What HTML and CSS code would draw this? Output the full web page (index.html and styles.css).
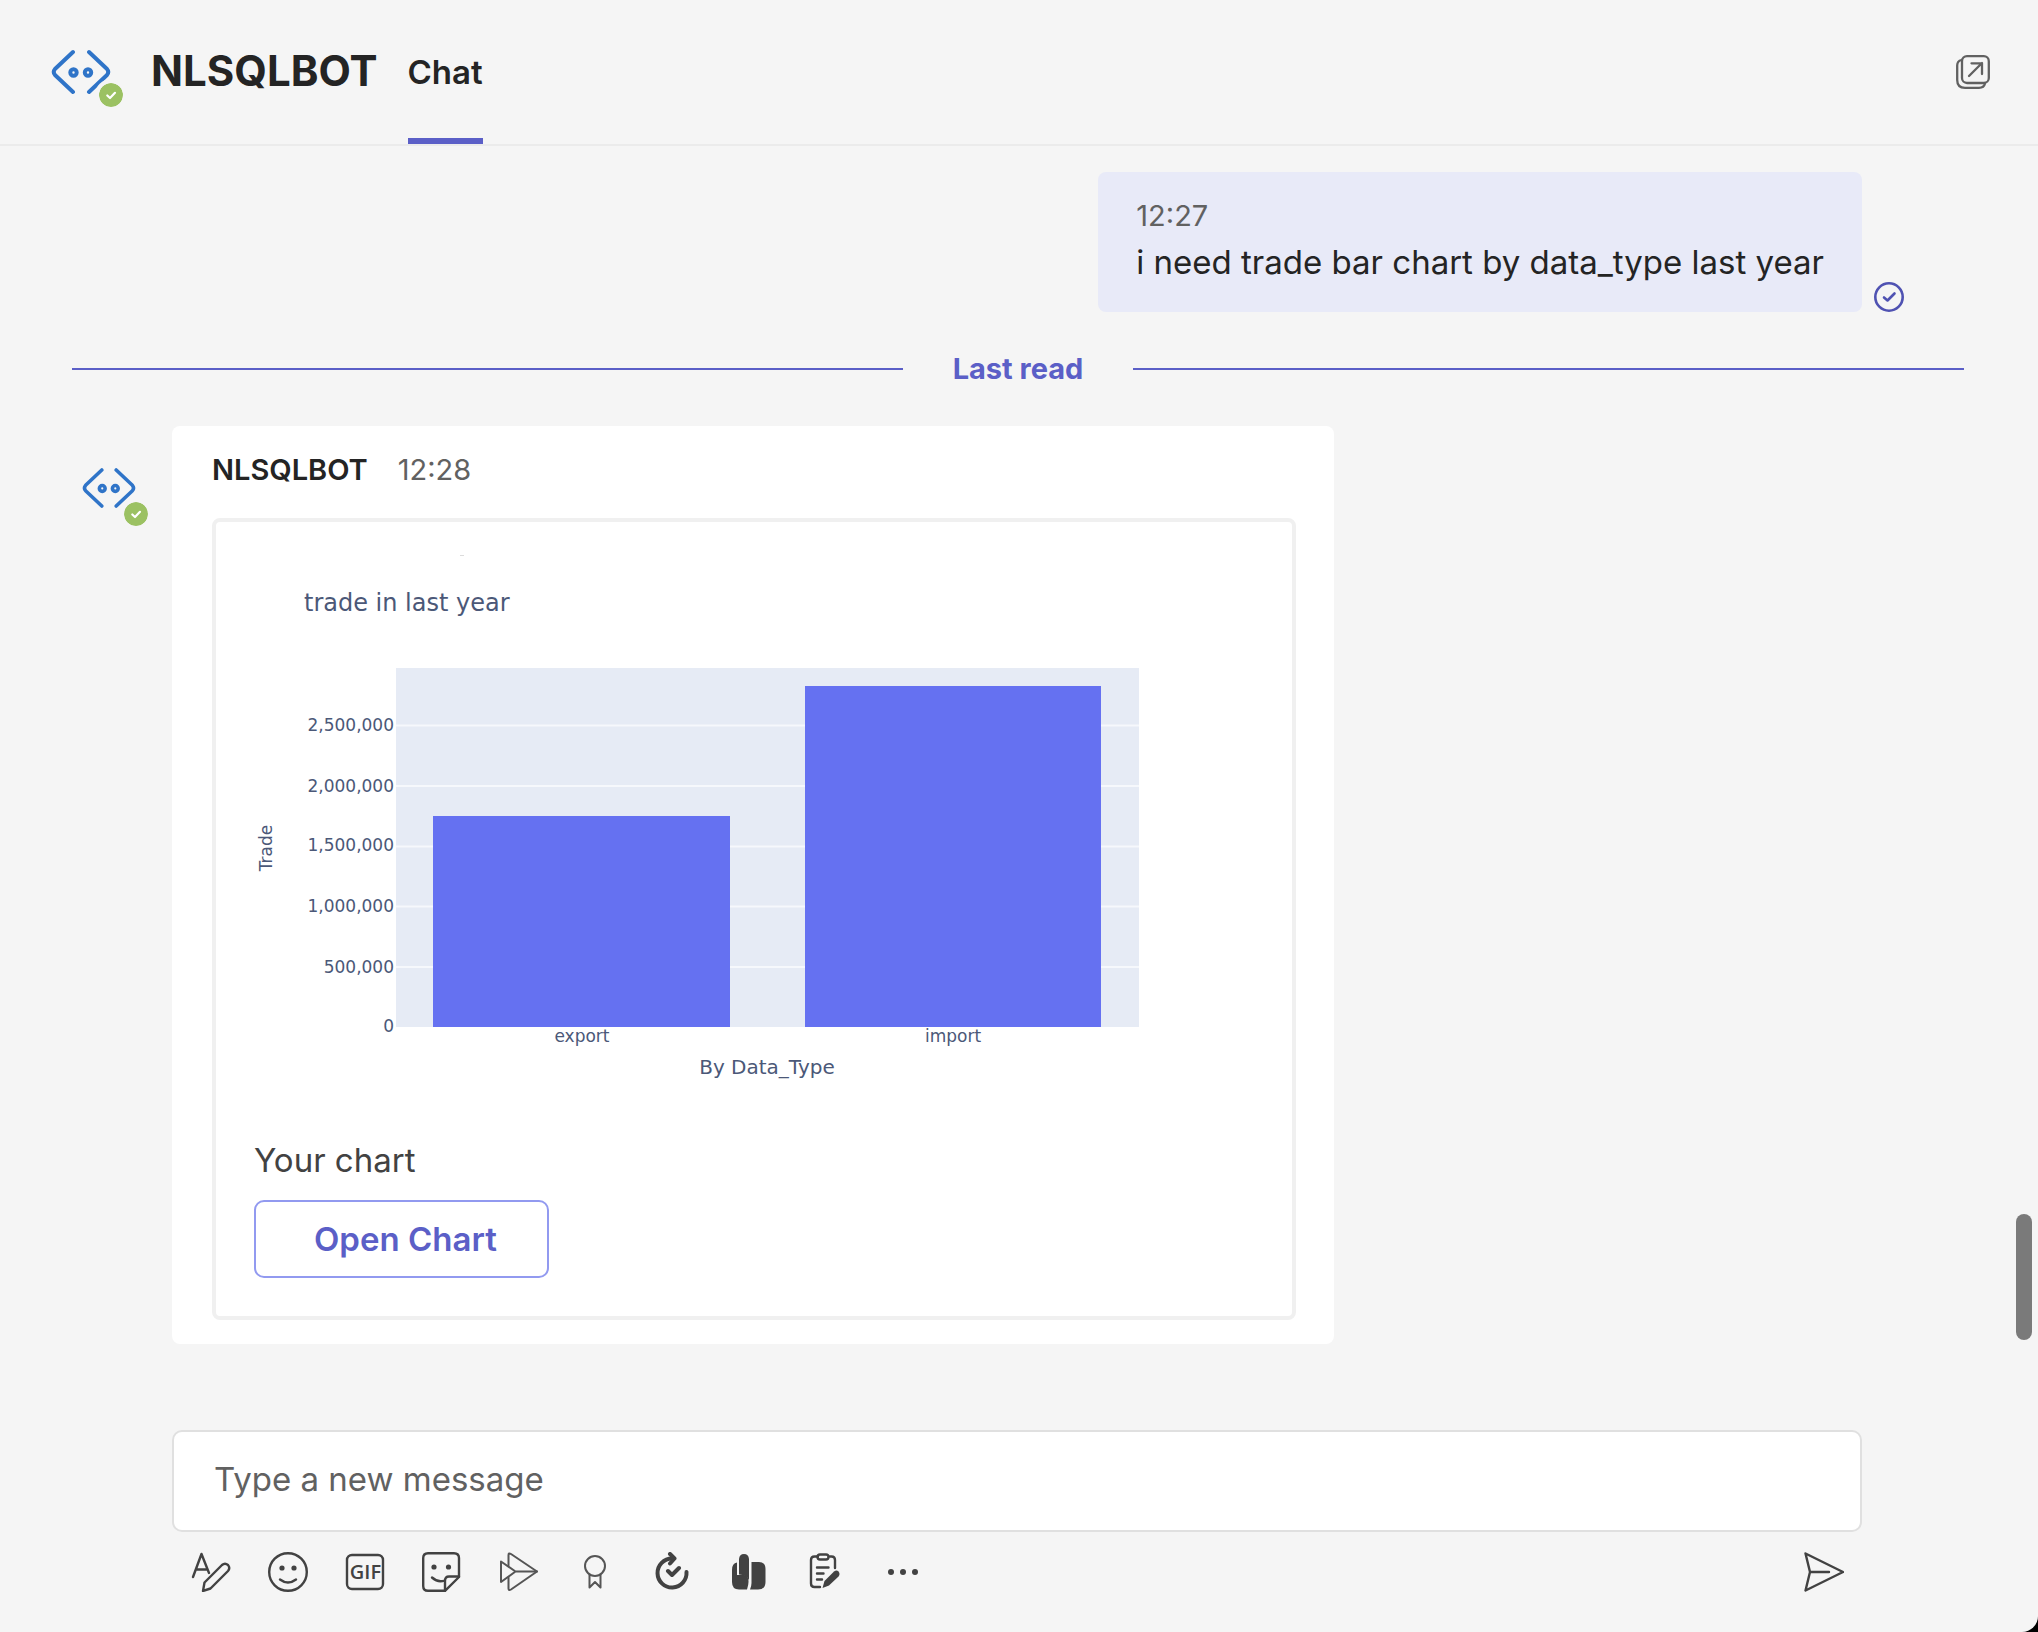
FILE: index.html
```html
<!DOCTYPE html>
<html lang="en">
<head>
  <meta charset="UTF-8">
  <meta name="viewport" content="width=device-width, initial-scale=1.0">
  <title>NLSQLBOT - Chat</title>
  <link rel="stylesheet" href="styles.css">
</head>
<body>

<!-- shared drawings -->
<svg class="defs" width="0" height="0" aria-hidden="true">
  <symbol id="bot" viewBox="0 0 60 46">
    <g fill="none" stroke="#2f74c8" stroke-width="4" stroke-linecap="round" stroke-linejoin="round">
      <path d="M22 3 L4 20 Q1.500 23 4 26 L22 43"/>
      <path d="M38 3 L56 20 Q58.500 23 56 26 L38 43"/>
      <circle cx="22.500" cy="23.500" r="3.200"/>
      <circle cx="37" cy="23.500" r="3.200"/>
    </g>
  </symbol>
  <symbol id="tick" viewBox="0 0 24 24">
    <circle cx="12" cy="12" r="12" fill="#9bc162"/>
    <path d="M8.300 12.500 L11 15 L16 9.800" fill="none" stroke="#fff" stroke-width="2.200" stroke-linecap="round" stroke-linejoin="round"/>
  </symbol>
</svg>

<div class="app">
  <header class="header">
    <div class="avatar">
      <svg class="avatar-icon"><use href="#bot"/></svg>
      <svg class="badge"><use href="#tick"/></svg>
    </div>
    <h1 class="title">NLSQLBOT</h1>
    <nav class="tabs">
      <a class="tab active" href="#">Chat</a>
    </nav>
    <button class="icon-button popout" aria-label="Pop out chat">
      <svg width="34" height="34" viewBox="0 0 34 34" fill="none" stroke="#616161" stroke-width="2.300" stroke-linecap="round" stroke-linejoin="round">
        <rect x="6" y="1.200" width="26.800" height="26.800" rx="5"/>
        <path d="M5.500 5 Q1.200 6 1.200 10.500 V25 Q1.200 32.800 9 32.800 H23 Q28 32.800 29 28.500"/>
        <path d="M13 21 L26 8 M15.500 8.300 H26 V19"/>
      </svg>
    </button>
  </header>

  <main class="messages">
    <div class="row own">
      <div class="bubble">
        <time class="time">12:27</time>
        <p class="text">i need trade bar chart by data_type last year</p>
      </div>
      <svg class="sent" width="30" height="30" viewBox="0 0 30 30" fill="none" stroke="#4f52b2" stroke-linecap="round" stroke-linejoin="round">
        <circle cx="15" cy="15" r="13.700" stroke-width="2.600"/>
        <path d="M10 15.500 L13.500 18.500 L20.500 11.500" stroke-width="2.600"/>
      </svg>
    </div>

    <div class="divider"><span>Last read</span></div>

    <div class="row">
      <div class="avatar small">
        <svg class="avatar-icon"><use href="#bot"/></svg>
        <svg class="badge"><use href="#tick"/></svg>
      </div>
      <article class="card">
        <div class="card-head">
          <strong>NLSQLBOT</strong>
          <time class="time">12:28</time>
        </div>
        <div class="attachment">
          <svg class="chart" viewBox="0 0 1000 580" role="img" aria-label="Bar chart: trade in last year">
            <path class="speck" d="M206 15.500 h4"/>
            <text class="chart-title" x="50" y="71">trade in last year</text>

            <rect class="plot" x="142" y="128" width="743" height="359"/>
            <g class="grid">
              <path d="M142 185.500 H885"/>
              <path d="M142 246 H885"/>
              <path d="M142 306.500 H885"/>
              <path d="M142 366.500 H885"/>
              <path d="M142 427 H885"/>
            </g>
            <rect class="bar" x="179" y="276" width="297" height="211"/>
            <rect class="bar" x="551" y="146" width="296" height="341"/>

            <g class="ticks y">
              <text x="140" y="191">2,500,000</text>
              <text x="140" y="252">2,000,000</text>
              <text x="140" y="311">1,500,000</text>
              <text x="140" y="372">1,000,000</text>
              <text x="140" y="433">500,000</text>
              <text x="140" y="492">0</text>
            </g>
            <g class="ticks x">
              <text x="328" y="502">export</text>
              <text x="699" y="502">import</text>
            </g>
            <text class="axis-title" x="513" y="534">By Data_Type</text>
            <text class="axis-title narrow" transform="translate(18 308) rotate(-90)">Trade</text>
          </svg>
          <p class="caption">Your chart</p>
          <button class="open-button">Open Chart</button>
        </div>
      </article>
    </div>
  </main>

  <footer class="composer">
    <input class="message-input" type="text" placeholder="Type a new message" aria-label="Type a new message">
    <div class="toolbar">
      <button class="icon-button" aria-label="Format">
        <svg viewBox="0 0 40 40">
          <path d="M2 25 L10.500 2 L18 21 M5 17.500 H15.500"/>
          <path d="M12 39 L13.500 30.500 L31 13 Q34 10.500 37 13 Q39.500 16 37 19 L19.500 36.500 Z"/>
        </svg>
      </button>
      <button class="icon-button" aria-label="Emoji">
        <svg viewBox="0 0 40 40">
          <circle cx="20" cy="20" r="18.800"/>
          <path d="M12 27.500 Q20 33.500 28 27.500"/>
          <circle class="fill" cx="14" cy="16" r="2.600"/>
          <circle class="fill" cx="26" cy="16" r="2.600"/>
        </svg>
      </button>
      <button class="icon-button" aria-label="GIF">
        <svg viewBox="0 0 40 40">
          <rect x="2" y="3" width="36" height="34" rx="5"/>
          <text class="gif" x="20.500" y="27">GIF</text>
        </svg>
      </button>
      <button class="icon-button" aria-label="Sticker">
        <svg viewBox="0 0 40 40">
          <path d="M6 1.200 H32 Q37 1.200 37 6 V25 L23 38.800 H6 Q1.200 38.800 1.200 34 V6 Q1.200 1.200 6 1.200 Z"/>
          <path d="M23 38.800 V29 Q23 24.500 27 24.500 H37 M10 25.500 Q16 31 22.500 28.500"/>
          <circle class="fill" cx="12" cy="15" r="2.600"/>
          <circle class="fill" cx="26.500" cy="15" r="2.600"/>
        </svg>
      </button>
      <button class="icon-button" aria-label="Stream">
        <svg class="thin" viewBox="0 0 40 40">
          <path d="M9.500 13.500 V3 Q9.500 0.500 12 2 L38 19.500 L12 37.500 Q9.500 39 9.500 36.500 V25.500"/>
          <path d="M2 9.500 L16.500 19.500 L2 30 Z M16.500 19.500 H38"/>
        </svg>
      </button>
      <button class="icon-button" aria-label="Praise">
        <svg class="thin" viewBox="0 0 40 40">
          <circle cx="19" cy="14" r="10"/>
          <path d="M13.500 23 V35.500 L19 30 L24.500 35.500 V23"/>
        </svg>
      </button>
      <button class="icon-button" aria-label="Updates">
        <svg viewBox="0 0 40 40">
          <path class="ring" d="M19 6.500 A14.500 14.500 0 1 0 33.500 20"/>
          <path class="ring" d="M17 2 L21.500 6.500 L17 11.500 M15 19 L19 23 L26 16"/>
        </svg>
      </button>
      <button class="icon-button" aria-label="Viva">
        <svg viewBox="0 0 40 40">
          <path class="fill" d="M7 10.500 V23 H14 Q18.500 24 18.500 29 V30 Q18.500 33 17 37.500 H9 Q2 37.500 2 30 V18 Q2 11 7 10.500 Z"/>
          <path class="fill" d="M9 7 Q9.500 2 14 2 Q18.500 2 19 7 V28 Q16.500 23 9 22.500 Z"/>
          <path class="fill" d="M21.500 10 H29 Q35.500 10 35.500 17 V30 Q35.500 37.500 28 37.500 H20 Q21.500 34 21.500 31 Z"/>
        </svg>
      </button>
      <button class="icon-button" aria-label="Approvals">
        <svg viewBox="0 0 40 40">
          <path d="M11 4.500 H7.500 Q4 4.500 4 8 V31.500 Q4 35 7.500 35 H13 M23 4.500 H24.500 Q28 4.500 28 8 V16"/>
          <rect x="10.500" y="2.500" width="11" height="5" rx="2.500"/>
          <path d="M10 15.500 H21.500 M10 21.500 H16.500 M10 27.500 H15"/>
          <path class="fill" d="M15.500 36 L17.500 29 L27 19.500 Q29.500 17.500 31.500 19.500 Q33.500 22 31.500 24.500 L22 33.500 Z"/>
        </svg>
      </button>
      <button class="icon-button" aria-label="More">
        <svg viewBox="0 0 40 40">
          <circle class="fill" cx="7" cy="20" r="3"/>
          <circle class="fill" cx="19" cy="20" r="3"/>
          <circle class="fill" cx="31" cy="20" r="3"/>
        </svg>
      </button>
      <button class="icon-button send" aria-label="Send">
        <svg viewBox="0 0 40 40">
          <path d="M1.500 1.500 L39 20 L1.500 38.500 L6 20 Z M6 20 H25"/>
        </svg>
      </button>
    </div>
  </footer>

  <div class="scroll-thumb"></div>
</div>

</body>
</html>
```

FILE: styles.css
```css
* {
  box-sizing: border-box;
}

body {
  margin: 0;
  background-color: #000;
  color: #242424;
  font-family: Inter, "Liberation Sans", sans-serif;
}

p,
h1 {
  margin: 0;
}

button {
  font-family: inherit;
  cursor: pointer;
}

.defs {
  position: absolute;
}

.app {
  position: relative;
  display: flex;
  flex-direction: column;
  min-height: 100vh;
  background-color: #f5f5f5;
  border-bottom-right-radius: 16px;
}

/* header */
.header {
  display: flex;
  align-items: stretch;
  height: 146px;
  padding: 0 48px 0 51px;
  border-bottom: 2px solid #ebebeb;
}

.avatar {
  position: relative;
  align-self: center;
  width: 60px;
  height: 46px;
  flex: none;
}

.avatar-icon {
  display: block;
  width: 100%;
  height: 100%;
}

.badge {
  position: absolute;
  right: -12px;
  bottom: -12px;
  width: 24px;
  height: 24px;
  border-radius: 50%;
  box-shadow: 0 0 0 4px #f5f5f5;
}

.title {
  margin-left: 40px;
  font-size: 42px;
  font-weight: 700;
  line-height: 142px;
}

.tabs {
  display: flex;
  margin-left: 30px;
}

.tab {
  color: #242424;
  font-size: 33px;
  font-weight: 600;
  line-height: 144px;
  text-decoration: none;
}

.tab.active {
  box-shadow: inset 0 -6px #5b5fc7;
}

.icon-button {
  display: flex;
  padding: 0;
  border: 0;
  background: none;
}

.popout {
  align-self: center;
  margin-left: auto;
}

/* messages */
.messages {
  display: flex;
  flex: 1;
  flex-direction: column;
  padding: 26px 74px 0 72px;
}

.row {
  display: flex;
  align-items: flex-start;
}

.row.own {
  align-items: flex-end;
  justify-content: flex-end;
  gap: 12px;
  padding-right: 60px;
}

.bubble {
  padding: 24px 38px 24px 38px;
  border-radius: 8px;
  background-color: #e8eaf8;
}

.time {
  display: block;
  color: #616161;
  font-size: 29px;
  line-height: 40px;
}

.text {
  font-size: 33px;
  line-height: 52px;
}

.divider {
  display: flex;
  align-items: center;
  gap: 50px;
  margin: 36px 0;
  color: #5b5fc7;
  font-size: 29px;
  font-weight: 700;
  line-height: 42px;
}

.divider::before,
.divider::after {
  content: "";
  flex: 1;
  height: 2px;
  background-color: #5b5fc7;
}

.avatar.small {
  align-self: flex-start;
  width: 54px;
  height: 42px;
  margin: 41px 36px 0 10px;
}

.small .badge {
  bottom: -17px;
}

.card {
  width: 100%;
  max-width: 1162px;
  padding: 24px 38px 24px 40px;
  border-radius: 8px;
  background-color: #fff;
}

.card-head {
  display: flex;
  gap: 30px;
  margin-bottom: 28px;
  font-size: 29px;
  line-height: 40px;
}

.card-head strong {
  font-weight: 600;
}

.attachment {
  padding: 18px 38px 38px;
  border: 4px solid #f0f0f0;
  border-radius: 8px;
}

.chart {
  display: block;
  width: 100%;
  font-family: "DejaVu Sans", Verdana, sans-serif;
  fill: #4b5878;
}

.chart-title {
  font-size: 24px;
}

.axis-title {
  font-size: 20px;
  text-anchor: middle;
}

.axis-title.narrow {
  font-size: 17px;
}

.ticks {
  font-size: 17px;
}

.ticks.y {
  text-anchor: end;
}

.ticks.x {
  text-anchor: middle;
}

.plot {
  fill: #e6ebf5;
}

.grid {
  stroke: #f6f8fc;
  stroke-width: 2;
}

.bar {
  fill: #6571f1;
}

.speck {
  stroke: #dcdcdc;
}

.caption {
  margin: 8px 0;
  color: #424242;
  font-size: 33px;
  line-height: 64px;
}

.open-button {
  display: block;
  height: 78px;
  padding: 0 50px 0 58px;
  border: 2px solid #929af0;
  border-radius: 10px;
  background-color: #fff;
  color: #5b5fc7;
  font-size: 33px;
  font-weight: 600;
}

/* composer */
.composer {
  padding: 0 176px 40px 172px;
}

.message-input {
  display: block;
  width: 100%;
  height: 102px;
  padding: 0 40px 4px;
  border: 2px solid #e0e0e0;
  border-radius: 10px;
  background-color: #fff;
  color: #242424;
  font-family: inherit;
  font-size: 33px;
}

.message-input::placeholder {
  color: #616161;
  opacity: 1;
}

.toolbar {
  display: flex;
  gap: 37px;
  padding: 20px 18px 0 19px;
}

.toolbar svg {
  display: block;
  width: 40px;
  height: 40px;
  fill: none;
  stroke: #424242;
  stroke-width: 2.4px;
  stroke-linecap: round;
  stroke-linejoin: round;
}

.toolbar .thin {
  stroke: #555;
  stroke-width: 2px;
}

.toolbar .ring {
  stroke-width: 4px;
}

.toolbar .fill {
  fill: #424242;
  stroke: none;
}

.toolbar .gif {
  fill: #424242;
  stroke: none;
  font-family: "Open Sans", sans-serif;
  font-size: 20px;
  font-weight: 600;
  text-anchor: middle;
}

.send {
  margin-left: auto;
}

.scroll-thumb {
  position: absolute;
  right: 6px;
  bottom: 292px;
  width: 16px;
  height: 126px;
  border-radius: 8px;
  background-color: #7a7a7a;
}
```
